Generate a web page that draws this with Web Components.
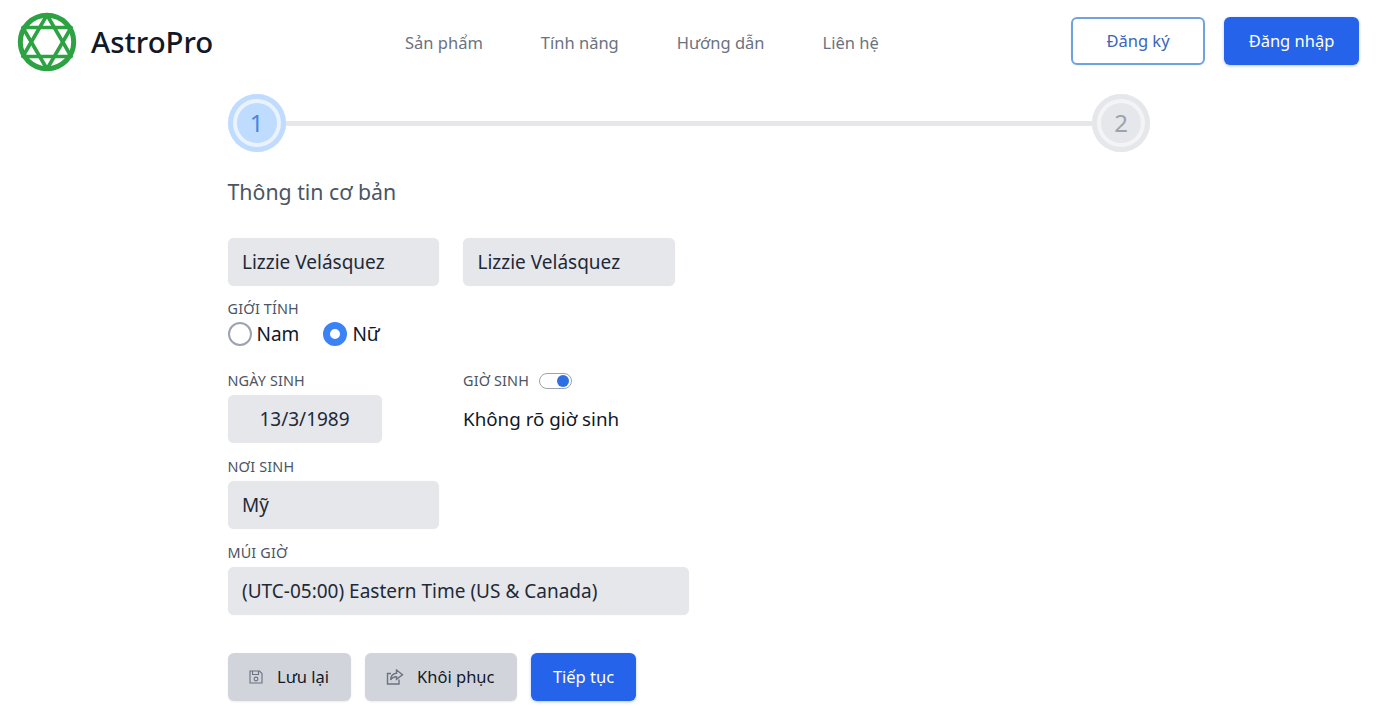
<!DOCTYPE html>
<html lang="vi">
<head>
<meta charset="utf-8">
<title>AstroPro</title>
<style>
  html, body { margin: 0; padding: 0; background: #fff; overflow: hidden; height: 714px; }
  body { font-family: "Noto Sans", "Open Sans", sans-serif; color: #111827; }
</style>
</head>
<body>
<app-header></app-header>
<main-form></main-form>

<script>
class AppButton extends HTMLElement {
  constructor() {
    super();
    this.attachShadow({ mode: 'open' });
    this.shadowRoot.innerHTML = `
      <style>
        :host {
          display: inline-flex;
          align-items: center;
          justify-content: center;
          box-sizing: border-box;
          height: 48px;
          padding-bottom: 1px;
          border-radius: 6px;
          font-size: 16.5px;
          gap: 14px;
          box-shadow: 0 1px 2px rgba(0,0,0,.08);
        }
        :host([kind=primary]) { background: #2563eb; color: #fff; box-shadow: 0 1px 3px rgba(37,99,235,.35); }
        :host([kind=outline]) { background: #fff; color: #3b65b5; border: 2px solid #6fa3e0; box-shadow: 0 1px 2px rgba(0,0,0,.05); }
        :host([kind=grey]) { background: #d1d5db; color: #111827; }
      </style>
      <slot name="icon"></slot><slot></slot>`;
  }
}

class AppHeader extends HTMLElement {
  constructor() {
    super();
    this.attachShadow({ mode: 'open' });
    this.shadowRoot.innerHTML = `
      <style>
        :host {
          display: flex;
          align-items: center;
          box-sizing: border-box;
          height: 84px;
          padding: 0 19px 2px 17px;
        }
        .logo { display: flex; align-items: center; gap: 14px; width: 388px; }
        .logo svg { margin-top: 2px; }
        .logo span { padding-top: 2px; font-size: 29.4px; font-weight: 500; color: #111827; }
        nav { display: flex; gap: 58px; padding-top: 2px; font-size: 16.5px; color: #6b7280; flex: 1; }
        .actions { display: flex; gap: 19px; }
        app-button { width: 135px; }
        app-button[kind=outline] { width: 134px; }
        svg { display: block; }
      </style>
      <div class="logo">
        <svg width="60" height="60" viewBox="0 0 60 60" fill="none" stroke="#2ca243" stroke-linejoin="round">
          <circle cx="30" cy="30" r="26.7" stroke-width="5"/>
          <polygon points="30,3 54.2,44.5 5.8,44.5" stroke-width="3.6"/>
          <polygon points="30,57 54.2,15.5 5.8,15.5" stroke-width="3.6"/>
        </svg>
        <span>AstroPro</span>
      </div>
      <nav>
        <a>Sản phẩm</a><a>Tính năng</a><a>Hướng dẫn</a><a>Liên hệ</a>
      </nav>
      <div class="actions">
        <app-button kind="outline">Đăng ký</app-button>
        <app-button kind="primary">Đăng nhập</app-button>
      </div>`;
  }
}

class StepBar extends HTMLElement {
  constructor() {
    super();
    this.attachShadow({ mode: 'open' });
    this.shadowRoot.innerHTML = `
      <style>
        :host { display: flex; align-items: center; }
        .step {
          box-sizing: border-box;
          width: 58px; height: 58px;
          padding-bottom: 2px;
          border-radius: 50%;
          display: flex; align-items: center; justify-content: center;
          font-size: 24px;
          flex: none;
        }
        .step.on { background: #bfdbfe; box-shadow: inset 0 0 0 5px #bfdbfe, inset 0 0 0 9px #eaf2fd; color: #4a86e0; }
        .step.off { background: #e5e7eb; box-shadow: inset 0 0 0 5px #e5e7eb, inset 0 0 0 9px #f3f4f6; color: #9ca3af; }
        .line { flex: 1; height: 5px; background: #e5e7eb; }
      </style>
      <div class="step on">1</div>
      <div class="line"></div>
      <div class="step off">2</div>`;
  }
}

class TextField extends HTMLElement {
  constructor() {
    super();
    this.attachShadow({ mode: 'open' });
    this.shadowRoot.innerHTML = `
      <style>
        :host {
          display: flex;
          align-items: center;
          box-sizing: border-box;
          height: 48px;
          padding: 0 14.5px;
          background: #e5e7eb;
          border-radius: 6px;
          font-size: 19px;
          color: #1f2937;
          box-shadow: 0 0 1px rgba(0,0,0,.1);
        }
        :host([center]) { justify-content: center; }
      </style>
      <slot></slot>`;
  }
}

class FieldLabel extends HTMLElement {
  constructor() {
    super();
    this.attachShadow({ mode: 'open' });
    this.shadowRoot.innerHTML = `
      <style>
        :host { display: block; font-size: 14.4px; line-height: 20px; letter-spacing: .15px; color: #4b5563; text-transform: uppercase; }
      </style>
      <slot></slot>`;
  }
}

class RadioOption extends HTMLElement {
  constructor() {
    super();
    this.attachShadow({ mode: 'open' });
    this.shadowRoot.innerHTML = `
      <style>
        :host { display: inline-flex; align-items: center; gap: 5px; font-size: 19px; color: #111827; }
        .dot { box-sizing: border-box; width: 24px; height: 24px; border-radius: 50%; border: 2px solid #9ca3af; background: #fff; }
        :host([checked]) .dot { border: 7px solid #3b82f6; }
      </style>
      <span class="dot"></span><slot></slot>`;
  }
}

class ToggleSwitch extends HTMLElement {
  constructor() {
    super();
    this.attachShadow({ mode: 'open' });
    this.shadowRoot.innerHTML = `
      <style>
        :host {
          display: inline-flex; align-items: center; justify-content: flex-end;
          box-sizing: border-box;
          width: 33px; height: 16px;
          padding-right: 2px;
          border: 1px solid #9ca3af;
          border-radius: 8px;
          background: #fff;
        }
        i { width: 12px; height: 12px; border-radius: 50%; background: #2f6fe4; }
      </style>
      <i></i>`;
  }
}

class MainForm extends HTMLElement {
  constructor() {
    super();
    this.attachShadow({ mode: 'open' });
    this.shadowRoot.innerHTML = `
      <style>
        :host { display: block; width: 922.5px; margin: 10px 0 0 227.5px; }
        h2 { margin: 25px 0 31px; font-size: 21.3px; line-height: 30px; font-weight: 400; color: #4b5563; }
        .row { display: flex; gap: 24px; }
        .w212 { width: 211.5px; }
        .gender { margin-top: 13px; }
        .radios { display: flex; gap: 24px; height: 28px; align-items: center; margin-top: 1px; }
        .birth { margin-top: 23px; }
        .birth > div:first-child { width: 154px; margin-right: 81.5px; flex: none; }
        .lab-row { display: flex; align-items: center; gap: 10px; }
        .unknown { font-size: 18.8px; line-height: 48px; color: #111827; margin-top: 4px; }
        .mt4 { margin-top: 4px; }
        .block { margin-top: 14px; }
        .tz { width: 461.5px; }
        .buttons { display: flex; gap: 14px; margin-top: 38px; }
        .save { width: 123px; }
        .restore { width: 152.5px; gap: 13px; padding-right: 1px; }
        .next { width: 105px; }
        svg { display: block; }
      </style>
      <step-bar></step-bar>
      <h2>Thông tin cơ bản</h2>
      <div class="row">
        <text-field class="w212">Lizzie Velásquez</text-field>
        <text-field class="w212">Lizzie Velásquez</text-field>
      </div>
      <div class="gender">
        <field-label>Giới tính</field-label>
        <div class="radios">
          <radio-option>Nam</radio-option>
          <radio-option checked>Nữ</radio-option>
        </div>
      </div>
      <div class="row birth" style="gap:0">
        <div>
          <field-label>Ngày sinh</field-label>
          <text-field class="mt4" center>13/3/1989</text-field>
        </div>
        <div>
          <div class="lab-row"><field-label>Giờ sinh</field-label><toggle-switch></toggle-switch></div>
          <div class="unknown">Không rõ giờ sinh</div>
        </div>
      </div>
      <div class="block">
        <field-label>Nơi sinh</field-label>
        <text-field class="w212 mt4">Mỹ</text-field>
      </div>
      <div class="block">
        <field-label>Múi giờ</field-label>
        <text-field class="tz mt4">(UTC-05:00) Eastern Time (US &amp; Canada)</text-field>
      </div>
      <div class="buttons">
        <app-button kind="grey" class="save">
          <svg slot="icon" width="14" height="14" viewBox="0 0 14 14" fill="none" stroke="#6b7280" stroke-width="1.1">
            <path d="M1 1h9.5l2.5 2.5V13H1z"/><path d="M3.5 1v3.5h6V1"/><circle cx="7" cy="9" r="1.9"/>
          </svg>
          Lưu lại
        </app-button>
        <app-button kind="grey" class="restore">
          <svg slot="icon" width="18" height="16" viewBox="0 0 18 16" fill="none" stroke="#6b7280" stroke-width="1.4">
            <path d="M13 10.5V15H1.5V4.5H5"/><path d="M10.5 1l6 4.7-6 4.7V7.8c-2.8 0-4.6 1-5.8 3.2 0-3.9 2.2-6.3 5.8-6.7z"/>
          </svg>
          Khôi phục
        </app-button>
        <app-button kind="primary" class="next">Tiếp tục</app-button>
      </div>`;
  }
}

customElements.define('app-button', AppButton);
customElements.define('step-bar', StepBar);
customElements.define('text-field', TextField);
customElements.define('field-label', FieldLabel);
customElements.define('radio-option', RadioOption);
customElements.define('toggle-switch', ToggleSwitch);
customElements.define('app-header', AppHeader);
customElements.define('main-form', MainForm);
</script>
</body>
</html>
